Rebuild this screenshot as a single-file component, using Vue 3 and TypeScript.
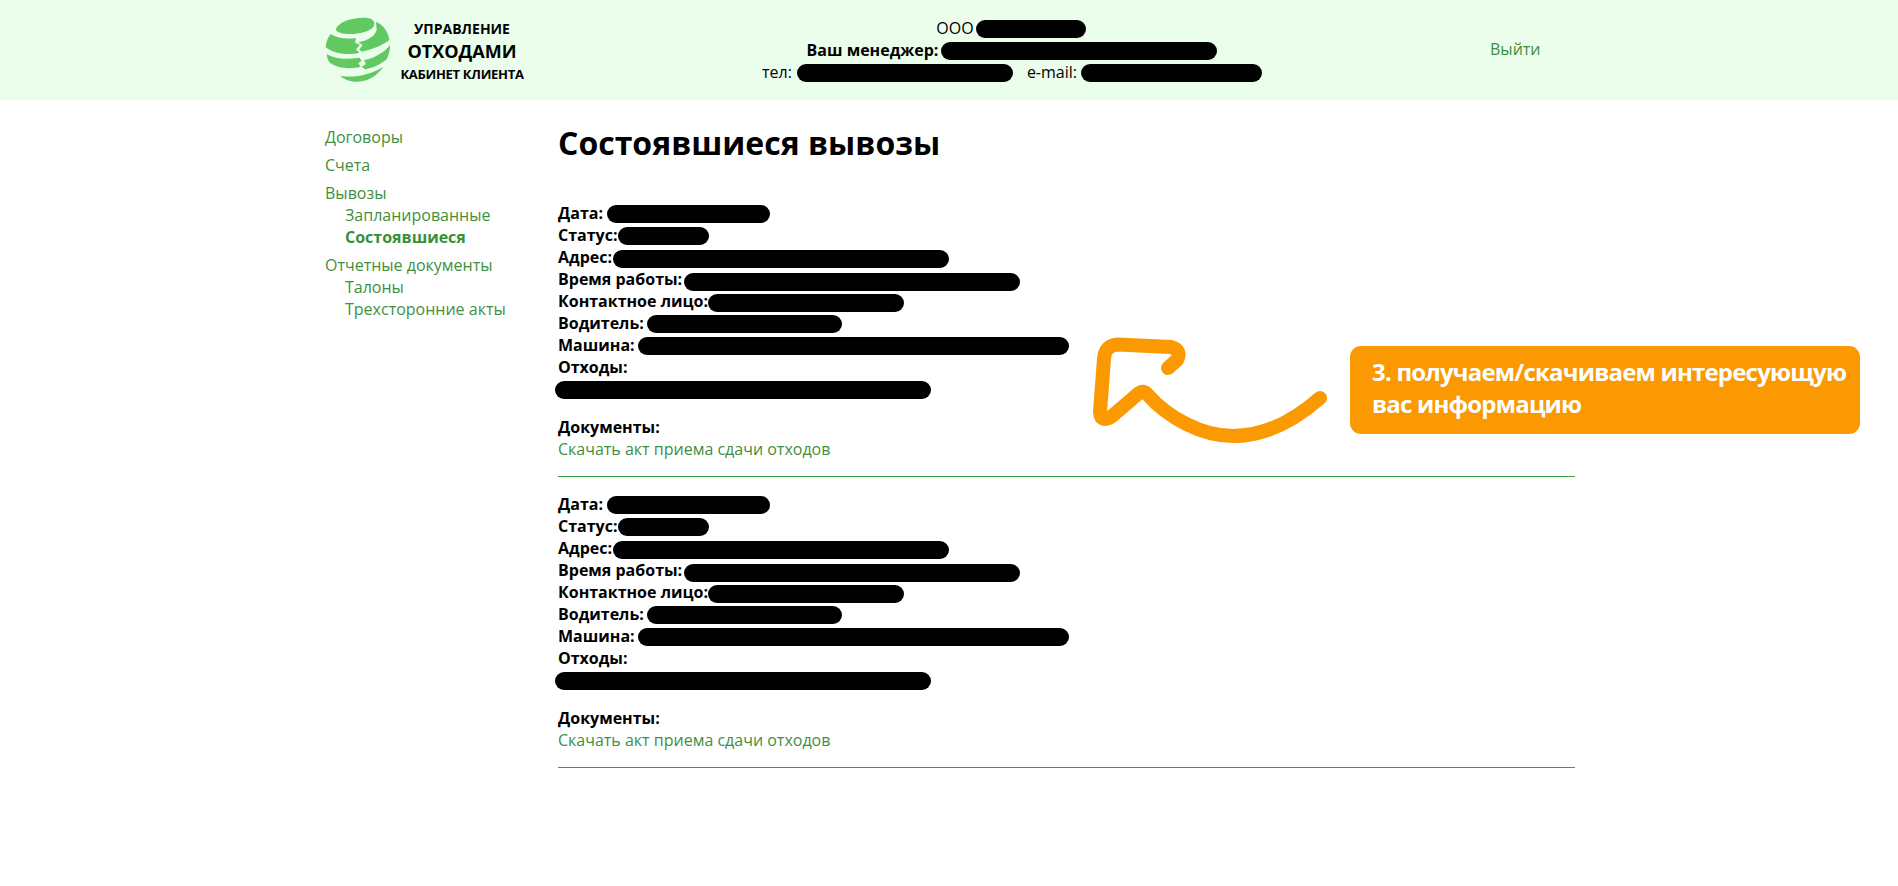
<script setup lang="ts">
interface Row {
  label: string
  bar: number
  gap: number
  shift: number
}

const menu = [
  { title: 'Договоры', items: [] as { title: string; active?: boolean }[] },
  { title: 'Счета', items: [] },
  {
    title: 'Вывозы',
    items: [{ title: 'Запланированные' }, { title: 'Состоявшиеся', active: true }],
  },
  {
    title: 'Отчетные документы',
    items: [{ title: 'Талоны' }, { title: 'Трехсторонние акты' }],
  },
]

// закрашенные значения: длина, отступ от подписи и сдвиг по вертикали, px
const rows: Row[] = [
  { label: 'Дата:', bar: 163, gap: 4, shift: 0 },
  { label: 'Статус:', bar: 91, gap: 1, shift: 0 },
  { label: 'Адрес:', bar: 336, gap: 1, shift: 1 },
  { label: 'Время работы:', bar: 336, gap: 2, shift: 2 },
  { label: 'Контактное лицо:', bar: 196, gap: 0, shift: 1 },
  { label: 'Водитель:', bar: 195, gap: 3, shift: 0 },
  { label: 'Машина:', bar: 431, gap: 3, shift: 0 },
]

const orders = [1, 2]
</script>

<template>
  <div class="page">
    <header class="header">
      <div class="wrap header-inner">
        <div class="logo">
          <svg class="logo-mark" viewBox="0 0 240 240" width="80" height="80" fill="#62c862">
            <path d="M47 58 C55 38 85 25 125 23 C150 22 163 28 163 42 C163 60 130 70 100 72 C75 73 50 70 47 58 Z" />
            <path d="M168 35 C190 45 205 65 208 90 C185 108 150 120 125 125 L118 118 L128 105 L115 97 C140 92 165 80 170 60 Z" />
            <path d="M32 72 C50 85 85 88 108 84 L105 98 L120 104 L108 118 L118 128 C80 138 40 130 17 112 C18 95 24 82 32 72 Z" />
            <path d="M132 150 C165 145 195 125 210 105 C211 120 206 135 200 148 C180 165 155 175 135 178 L125 170 L138 162 Z" />
            <path d="M20 132 C40 145 75 150 118 143 L125 152 L115 160 L122 170 C85 180 45 172 27 155 C23 148 21 140 20 132 Z" />
            <path d="M60 197 C100 205 150 195 190 170 C170 200 140 215 110 215 C90 215 72 208 60 197 Z" />
          </svg>
          <div class="logo-text">
            <div class="logo-top">УПРАВЛЕНИЕ</div>
            <div class="logo-main">ОТХОДАМИ</div>
            <div class="logo-sub">КАБИНЕТ КЛИЕНТА</div>
          </div>
        </div>
        <div class="contacts">
          <div class="contact-line org">ООО<span class="bar" style="width: 110px"></span></div>
          <div class="contact-line">
            <b>Ваш менеджер:</b><span class="bar manager" style="width: 276px"></span>
          </div>
          <div class="contact-line">
            тел:<span class="bar tel-bar" style="width: 216px"></span>
            <span class="email">e-mail:</span><span class="bar mail-bar" style="width: 181px"></span>
          </div>
        </div>
        <a class="link logout" href="#">Выйти</a>
      </div>
    </header>

    <div class="wrap body">
      <nav class="sidebar">
        <div v-for="group in menu" :key="group.title" class="menu-group">
          <a class="link" href="#">{{ group.title }}</a>
          <a
            v-for="item in group.items"
            :key="item.title"
            :class="['link', 'sub', { active: item.active }]"
            href="#"
          >{{ item.title }}</a>
        </div>
      </nav>

      <main class="content">
        <h1>Состоявшиеся вывозы</h1>
        <section v-for="order in orders" :key="order" class="order">
          <div v-for="row in rows" :key="row.label" class="row">
            <b>{{ row.label }}</b>
            <span
              class="bar"
              :style="{
                width: row.bar + 'px',
                marginLeft: row.gap + 'px',
                transform: `translateY(${row.shift}px)`,
              }"
            ></span>
          </div>
          <div class="row"><b>Отходы:</b></div>
          <div class="row"><span class="bar waste" style="width: 376px"></span></div>
          <div class="docs"><b>Документы:</b></div>
          <a class="link doc-link" href="#">Скачать акт приема сдачи отходов</a>
        </section>
      </main>
    </div>

    <svg class="arrow" viewBox="0 0 240 120" width="240" height="120">
      <path
        d="M78 38 L87 30 Q92 20 81 17 L28 14.5 Q15 15 14 29 L10 82 Q11 93 21 87 L49 63 Q53 60 57 64 C78 88 112 106 143 106 C175 106 205 90 230 68"
        fill="none"
        stroke="#fb9902"
        stroke-width="14"
        stroke-linecap="round"
        stroke-linejoin="round"
      />
    </svg>
    <div class="callout">3. получаем/скачиваем интересующую<br />вас информацию</div>
  </div>
</template>

<style scoped>
.page {
  position: relative;
  min-height: 886px;
  font-family: 'Open Sans', 'Liberation Sans', sans-serif;
  font-size: 16px;
  line-height: 22px;
  color: #000;
  background: #fff;
}

.wrap {
  width: 1250px;
  margin-left: 325px;
}

.header {
  height: 100px;
  background: #ebfeeb;
}

.header-inner {
  display: flex;
  align-items: center;
  height: 100%;
}

.logo {
  display: flex;
  align-items: center;
  width: 233px;
  flex-shrink: 0;
}

.logo-mark {
  display: block;
  margin-left: -5px;
  margin-right: -5px;
  flex-shrink: 0;
}

.logo-text {
  width: 158px;
  margin-left: -12px;
  padding-top: 1px;
  text-align: center;
  font-weight: 700;
  white-space: nowrap;
}

.logo-top {
  font-size: 14px;
  line-height: 23px;
}

.logo-main {
  font-size: 18px;
  line-height: 23px;
}

.logo-sub {
  font-size: 13px;
  line-height: 22px;
  letter-spacing: -0.3px;
}

.contacts {
  width: 908px;
  flex-shrink: 0;
  text-align: center;
}

.contact-line {
  height: 22px;
  white-space: nowrap;
}

.org {
  padding-right: 2px;
}

.email {
  margin-left: 14px;
}

.bar {
  display: inline-block;
  height: 18px;
  margin-left: 2px;
  border-radius: 9px;
  background: #000;
  vertical-align: -4px;
}

.manager {
  margin-left: 3px;
}

.tel-bar {
  margin-left: 5px;
}

.mail-bar {
  margin-left: 4px;
}

.logout {
  margin-left: 24px;
  margin-top: -2px;
}

.link {
  display: block;
  color: #3f8f3f;
  text-decoration: none;
  white-space: nowrap;
}

.body {
  display: flex;
}

.sidebar {
  width: 233px;
  flex-shrink: 0;
  padding-top: 26px;
}

.menu-group {
  margin-bottom: 6px;
}

.sub {
  padding-left: 20px;
}

.active {
  color: #389038;
  font-weight: 700;
}

.content {
  width: 1017px;
}

h1 {
  margin: 23px 0 40px;
  font-size: 32px;
  line-height: 40px;
  font-weight: 700;
}

.order {
  padding-bottom: 16px;
  margin-bottom: 17px;
  border-bottom: 1px solid #399a39;
}

.row {
  height: 22px;
  display: flex;
  align-items: center;
}

.row b {
  margin-top: -2px;
}

.waste {
  margin-left: -3px;
}

.docs {
  height: 22px;
  margin-top: 15px;
}

.arrow {
  position: absolute;
  left: 1090px;
  top: 330px;
}

.callout {
  position: absolute;
  left: 1350px;
  top: 346px;
  box-sizing: border-box;
  width: 510px;
  height: 88px;
  padding: 10px 0 0 22px;
  border-radius: 11px;
  background: #fb9902;
  color: #fff;
  font-size: 24px;
  line-height: 32px;
  font-weight: 700;
  letter-spacing: -0.8px;
  white-space: nowrap;
}
</style>

<style>
body {
  margin: 0;
}
</style>
